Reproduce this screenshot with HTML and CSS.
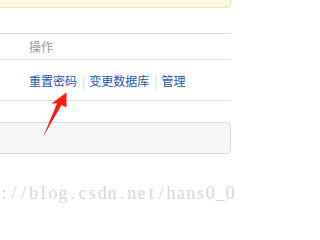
FILE: index.html
```html
<!DOCTYPE html>
<html>
<head>
<meta charset="utf-8">
<link rel="stylesheet" href="styles.css">
</head>
<body>
<div class="page">
  <div class="alert"></div>
  <div class="table">
    <div class="row head"><span class="cell">操作</span></div>
    <div class="row body">
      <span class="cell links">
        <a class="link">重置密码</a><span class="sep">|</span><a class="link">变更数据库</a><span class="sep">|</span><a class="link">管理</a>
      </span>
    </div>
  </div>
  <div class="well"></div>
  <div class="watermark"><span class="ch">:</span><span class="ch">/</span><span class="ch">/</span><span class="ch">b</span><span class="ch">l</span><span class="ch">o</span><span class="ch">g</span><span class="ch">.</span><span class="ch">c</span><span class="ch">s</span><span class="ch">d</span><span class="ch">n</span><span class="ch">.</span><span class="ch">n</span><span class="ch">e</span><span class="ch">t</span><span class="ch">/</span><span class="ch">h</span><span class="ch">a</span><span class="ch">n</span><span class="ch">s</span><span class="ch">0</span><span class="ch">_</span><span class="ch">0</span></div>
</div>
<svg class="arrow" width="250" height="213" viewBox="0 0 250 213">
  <polygon points="66.5,92.5 51.5,103.5 57,103.5 43,137 61.5,105 66.5,107.5" fill="#ff1c12"/>
</svg>
</body>
</html>
```
FILE: styles.css
```css
html, body {
  margin: 0;
  padding: 0;
  background: #fff;
  overflow: hidden;
  width: 250px;
  height: 213px;
}
body {
  position: relative;
  font-family: "Noto Sans CJK SC", "Noto Sans", sans-serif;
  font-size: 12px;
}
.page {
  margin-left: -12px;
  width: 243px;
}
.alert {
  margin-top: -22px;
  height: 28px;
  background: #fdf8e4;
  border: 1px solid #f8e3a8;
  border-radius: 4px;
}
.table {
  margin-top: 25px;
  border-top: 1px solid #dddddd;
}
.row {
  display: flex;
  align-items: center;
  border-bottom: 1px solid #dddddd;
  padding-left: 41px;
}
.row.head {
  height: 25px;
  color: #999999;
}
.row.body {
  height: 40px;
}
.links {
  display: flex;
  align-items: center;
}
.link {
  color: #1d57b2;
  text-decoration: none;
}
.sep {
  color: #c9d4e4;
  padding: 0 4px 0 5px;
}
.well {
  margin-top: 21px;
  height: 30px;
  background: #f7f7f7;
  border: 1px solid #dcdcdc;
  border-radius: 4px;
}
.watermark {
  margin-top: 31px;
  margin-left: 11px;
  display: flex;
  font-family: "Liberation Serif", serif;
  font-size: 18px;
  line-height: 16px;
  color: #d9d7d0;
  white-space: nowrap;
}
.ch {
  flex: 0 0 9.83px;
  text-align: center;
}
.arrow {
  position: absolute;
  left: 0;
  top: 0;
}
```
